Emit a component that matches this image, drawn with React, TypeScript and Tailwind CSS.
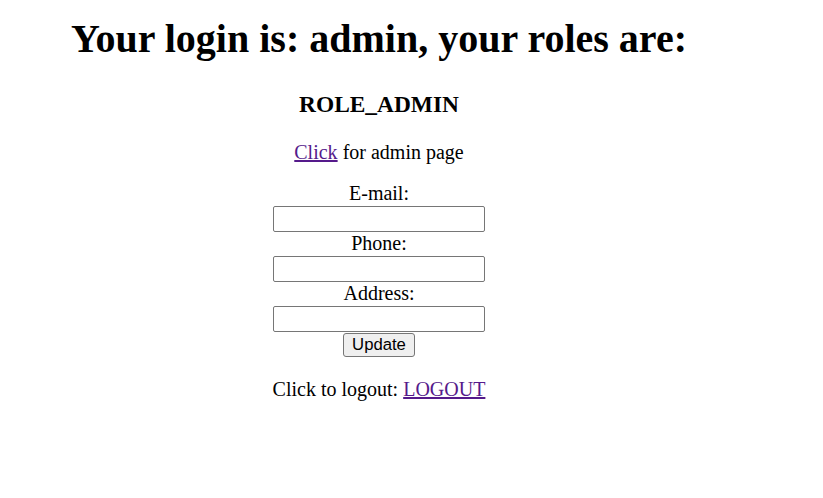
import React from 'react';

const fields = ['E-mail:', 'Phone:', 'Address:'];

const App = () => {
    return (
        <div className="w-[823px] h-[498px] bg-white text-black font-['Liberation_Serif',serif]">
            <div className="w-[758px] flex flex-col items-center text-center">
                {/* Titre */}
                <h1 className="mt-[16px] text-[40px] leading-[46px] font-bold">Your login is: admin, your roles are:</h1>
                <h3 className="mt-[29px] text-[23.4px] leading-[27px] font-bold">ROLE_ADMIN</h3>
                <p className="mt-[23px] text-[20px] leading-[23px]">
                    <a href="#" className="text-[#551a8b] underline">Click</a> for admin page
                </p>

                {/* Formulaire */}
                <form className="mt-[18px] flex flex-col items-center text-[20px] leading-[23px]">
                    {fields.map((label) => (
                        <div key={label} className="flex flex-col items-center">
                            <label>{label}</label>
                            <input
                                type="text"
                                className="mt-[1px] w-[212px] h-[26px] border border-[#767676] rounded-[2px] bg-white px-[2px]"
                            />
                        </div>
                    ))}
                    <button
                        type="button"
                        className="mt-[1px] w-[72px] h-[24px] border border-[#767676] rounded-[3px] bg-[#efefef] font-['Liberation_Sans',sans-serif] text-[16.7px] leading-[20px]"
                    >
                        Update
                    </button>
                </form>

                <p className="mt-[21px] text-[20px] leading-[23px]">
                    Click to logout: <a href="#" className="text-[#551a8b] underline">LOGOUT</a>
                </p>
            </div>
        </div>
    );
};

export default App;
